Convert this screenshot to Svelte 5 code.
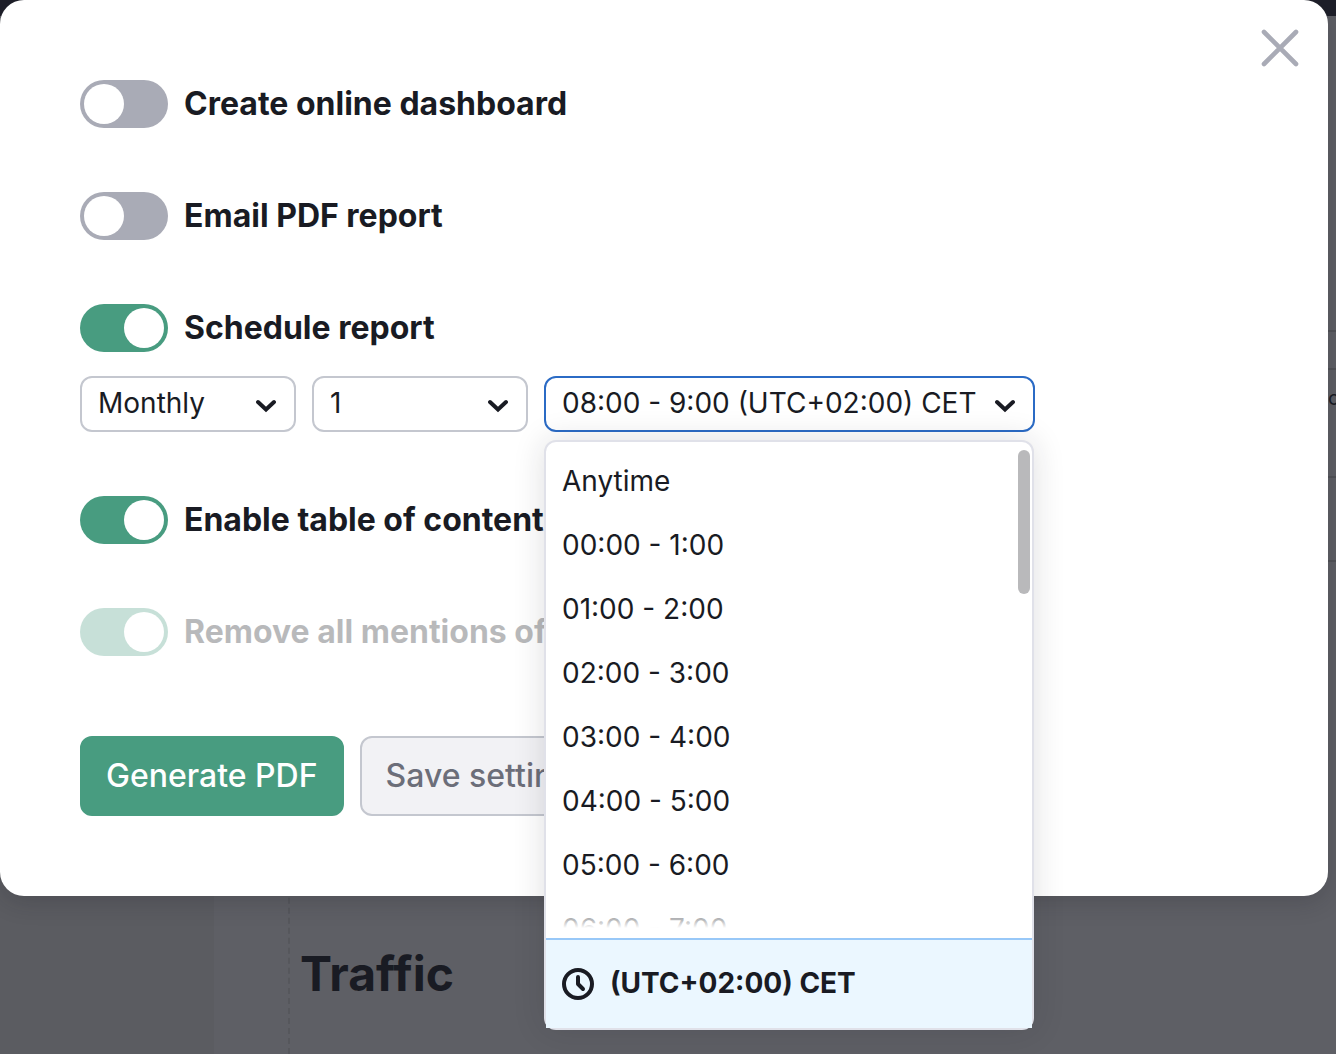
<script lang="ts">
  let createDashboard = $state(false);
  let emailReport = $state(false);
  let scheduleReport = $state(true);
  let tableOfContents = $state(true);
  let removeMentions = $state(true);

  let period = $state('Monthly');
  let day = $state('1');
  let time = $state('08:00 - 9:00');
  let menuOpen = $state(true);

  const zone = '(UTC+02:00) CET';
  const periods = ['Daily', 'Weekly', 'Monthly'];
  const days = Array.from({ length: 31 }, (_, i) => String(i + 1));
  const hours = Array.from(
    { length: 24 },
    (_, i) => `${String(i).padStart(2, '0')}:00 - ${i + 1}:00`
  );
  const times = ['Anytime', ...hours];

  function toggleMenu(event: MouseEvent) {
    event.preventDefault();
    menuOpen = !menuOpen;
  }

  function pickTime(value: string) {
    time = value;
    menuOpen = false;
  }
</script>

{#snippet chevron()}
  <svg class="chevron" viewBox="0 0 20 14" aria-hidden="true">
    <path d="M2 3 L10 10.5 L18 3" />
  </svg>
{/snippet}

<div class="page">
  <div class="topbar"></div>
  <div class="workspace">
    <div class="sidebar"></div>
    <div class="report">
      <h2>Traffic</h2>
    </div>
    <div class="rail">
      <hr />
      <hr class="dashed" />
      <span>o</span>
      <hr class="dashed" />
      <hr />
    </div>
  </div>

  <div class="modal" role="dialog" aria-label="Report settings">
    <button class="close" aria-label="Close">
      <svg viewBox="0 0 48 48" aria-hidden="true">
        <path d="M8 8 L40 40 M40 8 L8 40" />
      </svg>
    </button>

    <label class="switch">
      <input type="checkbox" bind:checked={createDashboard} />
      Create online dashboard
    </label>
    <label class="switch">
      <input type="checkbox" bind:checked={emailReport} />
      Email PDF report
    </label>

    <div class="schedule">
      <label class="switch">
        <input type="checkbox" bind:checked={scheduleReport} />
        Schedule report
      </label>
      <div class="fields">
        <div class="field">
          <select aria-label="Period" bind:value={period}>
            {#each periods as item}
              <option>{item}</option>
            {/each}
          </select>
          {@render chevron()}
        </div>
        <div class="field">
          <select aria-label="Day" bind:value={day}>
            {#each days as item}
              <option>{item}</option>
            {/each}
          </select>
          {@render chevron()}
        </div>
        <div class="field time">
          <select
            aria-label="Time"
            class:active={menuOpen}
            bind:value={time}
            onmousedown={toggleMenu}
          >
            {#each times as item}
              <option value={item}>{item} {zone}</option>
            {/each}
          </select>
          {@render chevron()}

          {#if menuOpen}
            <div class="menu">
              <div class="list" role="listbox" aria-label="Time">
                {#each times as item}
                  <button
                    class="option"
                    role="option"
                    aria-selected={item === time}
                    onclick={() => pickTime(item)}
                  >
                    {item}
                  </button>
                {/each}
              </div>
              <div class="fade"></div>
              <div class="thumb"></div>
              <div class="zone">
                <svg viewBox="0 0 32 32" aria-hidden="true">
                  <circle cx="16" cy="16" r="14" />
                  <path d="M16 9 V16 L21 21" />
                </svg>
                <span>{zone}</span>
              </div>
            </div>
          {/if}
        </div>
      </div>
    </div>

    <label class="switch">
      <input type="checkbox" bind:checked={tableOfContents} />
      Enable table of contents
    </label>
    <label class="switch disabled">
      <input type="checkbox" bind:checked={removeMentions} disabled />
      Remove all mentions of Semrush
    </label>

    <div class="actions">
      <button class="btn btn-green">Generate PDF</button>
      <button class="btn btn-gray">Save settings</button>
    </div>
  </div>
</div>

<style>
  :global(body) {
    margin: 0;
    background: #5e5f65;
  }

  .page {
    position: relative;
    display: flex;
    flex-direction: column;
    min-height: 100vh;
    overflow: hidden;
    font-family: Inter, sans-serif;
    color: #191b23;
  }

  .page * {
    box-sizing: border-box;
  }

  button,
  select {
    font-family: inherit;
    color: inherit;
    cursor: pointer;
  }

  .topbar {
    height: 16px;
    background: #1e1f29;
  }

  .workspace {
    flex: 1;
    display: flex;
  }

  .sidebar {
    width: 214px;
    background: #5b5c61;
  }

  .report {
    flex: 1;
    display: flex;
    align-items: flex-end;
    margin-left: 74px;
    padding: 0 10px 48px;
    border-left: 2px dashed #56575c;
  }

  h2 {
    margin: 0;
    font-size: 48px;
    line-height: 64px;
    font-weight: 700;
  }

  .rail {
    width: 8px;
    padding-top: 314px;
    overflow: hidden;
  }

  .rail hr {
    margin: 0 0 36px;
    border: 0;
    border-top: 2px solid #515257;
  }

  .rail hr.dashed {
    margin-bottom: 16px;
    border-top-style: dashed;
  }

  .rail span {
    display: block;
    height: 24px;
    margin-bottom: 66px;
    font-size: 20px;
    line-height: 24px;
  }

  .rail span + hr.dashed {
    margin-bottom: 82px;
  }

  .modal {
    position: absolute;
    top: 0;
    left: 0;
    right: 8px;
    display: flex;
    flex-direction: column;
    align-items: flex-start;
    gap: 64px;
    padding: 80px;
    border-radius: 24px;
    background: #fff;
    box-shadow: 0 6px 24px rgba(25, 27, 35, 0.2);
  }

  .close {
    position: absolute;
    top: 24px;
    right: 24px;
    width: 48px;
    height: 48px;
    padding: 0;
    border: none;
    background: none;
  }

  .close svg {
    display: block;
    fill: none;
    stroke: #a9abb6;
    stroke-width: 4.6;
    stroke-linecap: round;
  }

  .switch {
    display: flex;
    align-items: center;
    gap: 16px;
    font-size: 32px;
    line-height: 48px;
    font-weight: 700;
    white-space: nowrap;
    cursor: pointer;
  }

  .switch input {
    appearance: none;
    display: flex;
    width: 88px;
    height: 48px;
    margin: 0;
    padding: 4px;
    border-radius: 24px;
    background: #a9abb6;
  }

  .switch input::before {
    content: '';
    width: 40px;
    height: 40px;
    border-radius: 50%;
    background: #fff;
  }

  .switch input:checked {
    justify-content: flex-end;
    background: #489c80;
  }

  .switch.disabled {
    opacity: 0.3;
    cursor: default;
  }

  .schedule {
    display: flex;
    flex-direction: column;
    gap: 24px;
  }

  .fields {
    display: flex;
    gap: 16px;
  }

  .field {
    position: relative;
    width: 216px;
  }

  .field.time {
    width: 491px;
  }

  select {
    appearance: none;
    display: block;
    width: 100%;
    height: 56px;
    padding: 0 56px 2px 16px;
    border: 2px solid #c4c7cf;
    border-radius: 12px;
    background: #fff;
    font-size: 28px;
  }

  select.active {
    border-color: #2b6bc5;
    outline: none;
  }

  .chevron {
    position: absolute;
    top: 23px;
    right: 20px;
    width: 20px;
    height: 14px;
    fill: none;
    stroke: #191b23;
    stroke-width: 4;
    stroke-linecap: round;
    pointer-events: none;
  }

  .menu {
    position: absolute;
    top: 64px;
    left: 0;
    width: 490px;
    border: 2px solid #e0e1e9;
    border-radius: 12px;
    background: #fff;
    box-shadow: 0 0 32px rgba(25, 27, 35, 0.14);
    z-index: 1;
  }

  .list {
    height: 488px;
    margin-bottom: 8px;
    padding-top: 7px;
    border-radius: 12px;
    overflow-y: auto;
    scrollbar-width: none;
  }

  .option {
    display: block;
    width: 100%;
    padding: 0 16px;
    border: none;
    background: none;
    font-size: 28px;
    line-height: 64px;
    text-align: left;
  }

  .fade {
    position: absolute;
    top: 464px;
    left: 0;
    right: 0;
    height: 24px;
    background: linear-gradient(rgba(255, 255, 255, 0.4), rgba(255, 255, 255, 0.7) 60%, #fff 92%);
    pointer-events: none;
  }

  .thumb {
    position: absolute;
    top: 8px;
    right: 2px;
    width: 12px;
    height: 144px;
    border-radius: 6px;
    background: #b9b9bb;
  }

  .zone {
    display: flex;
    align-items: center;
    gap: 16px;
    height: 90px;
    padding: 0 16px;
    border-top: 2px solid #98c8f8;
    background: #ebf7ff;
    font-size: 28px;
    font-weight: 700;
  }

  .zone span {
    padding-bottom: 2px;
  }

  .zone svg {
    width: 32px;
    height: 32px;
    fill: none;
    stroke: #191b23;
    stroke-width: 4;
    stroke-linecap: round;
    stroke-linejoin: round;
  }

  .actions {
    display: flex;
    gap: 16px;
    padding-top: 16px;
  }

  .btn {
    height: 80px;
    padding: 0 24px 2px;
    border: 2px solid transparent;
    border-radius: 12px;
    font-size: 32px;
    font-weight: 500;
  }

  .btn-green {
    border-color: #489c80;
    background: #489c80;
    color: #fff;
  }

  .btn-gray {
    border-color: #c4c7cf;
    background: #f2f2f5;
    color: #6c6e79;
  }
</style>
